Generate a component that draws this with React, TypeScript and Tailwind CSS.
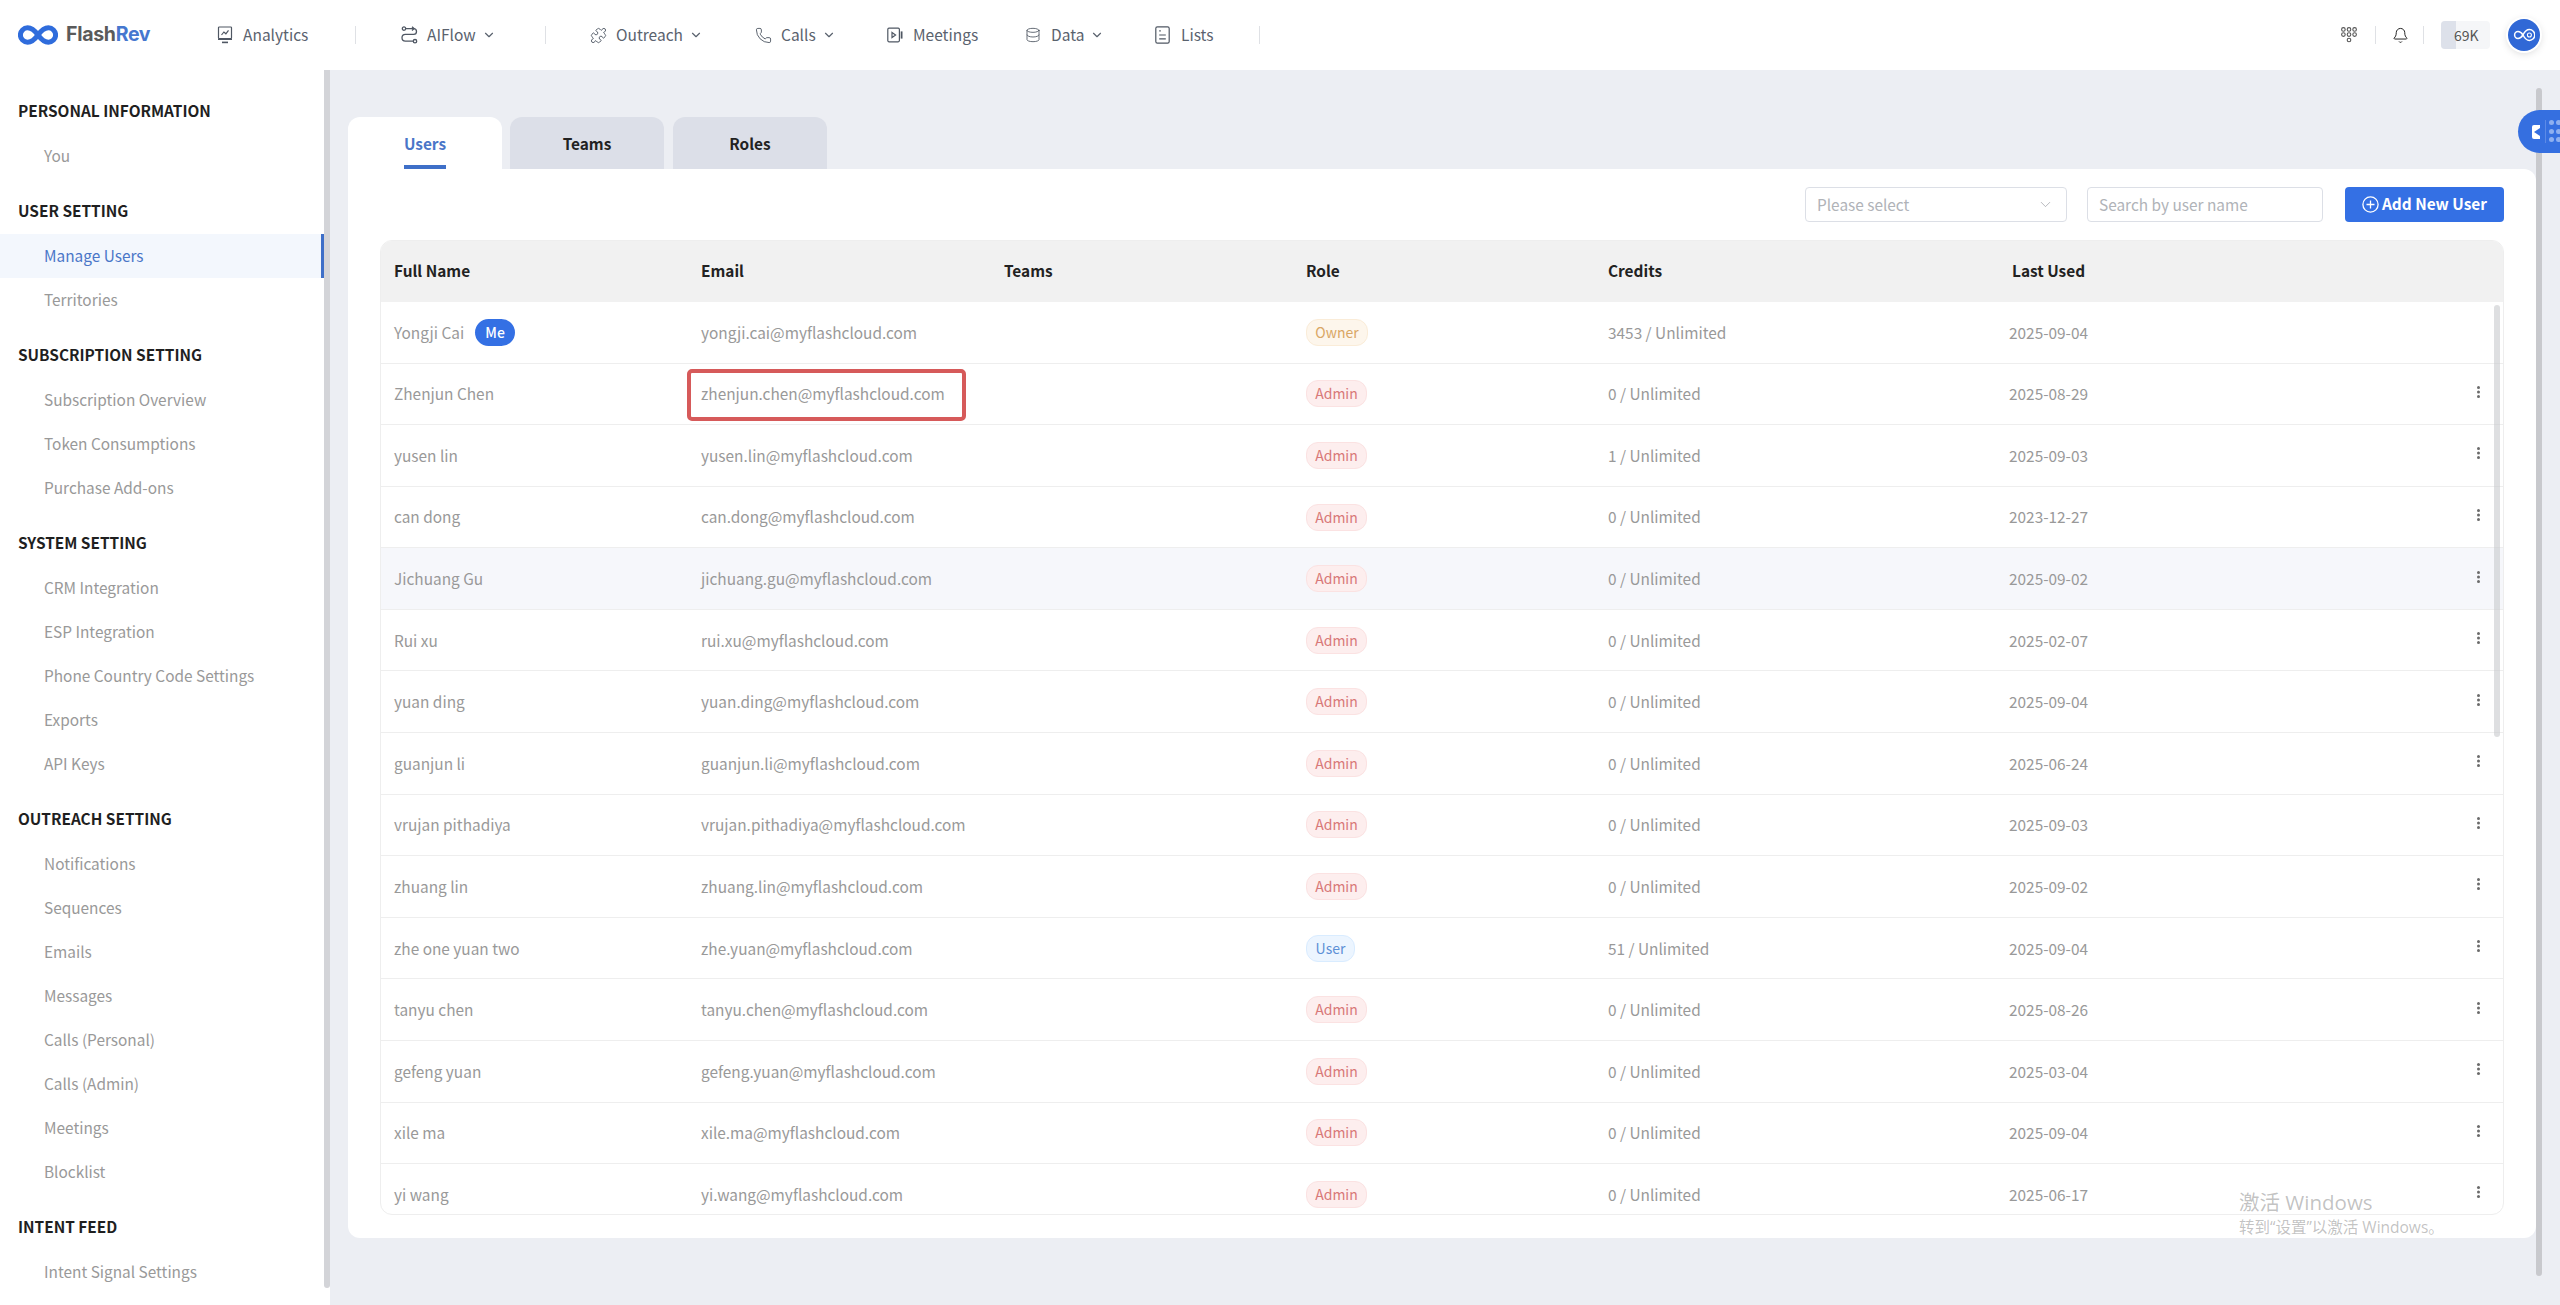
import { Bell, ChevronDown, Database, Phone, Puzzle } from 'lucide-react'
import { ReactNode } from 'react'

const sidebar = [
  { title: 'PERSONAL INFORMATION', items: ['You'] },
  { title: 'USER SETTING', items: ['Manage Users', 'Territories'] },
  { title: 'SUBSCRIPTION SETTING', items: ['Subscription Overview', 'Token Consumptions', 'Purchase Add-ons'] },
  { title: 'SYSTEM SETTING', items: ['CRM Integration', 'ESP Integration', 'Phone Country Code Settings', 'Exports', 'API Keys'] },
  {
    title: 'OUTREACH SETTING',
    items: ['Notifications', 'Sequences', 'Emails', 'Messages', 'Calls (Personal)', 'Calls (Admin)', 'Meetings', 'Blocklist'],
  },
  { title: 'INTENT FEED', items: ['Intent Signal Settings'] },
]

const users = [
  ['Yongji Cai', 'yongji.cai@myflashcloud.com', 'Owner', '3453 / Unlimited', '2025-09-04'],
  ['Zhenjun Chen', 'zhenjun.chen@myflashcloud.com', 'Admin', '0 / Unlimited', '2025-08-29'],
  ['yusen lin', 'yusen.lin@myflashcloud.com', 'Admin', '1 / Unlimited', '2025-09-03'],
  ['can dong', 'can.dong@myflashcloud.com', 'Admin', '0 / Unlimited', '2023-12-27'],
  ['Jichuang Gu', 'jichuang.gu@myflashcloud.com', 'Admin', '0 / Unlimited', '2025-09-02'],
  ['Rui xu', 'rui.xu@myflashcloud.com', 'Admin', '0 / Unlimited', '2025-02-07'],
  ['yuan ding', 'yuan.ding@myflashcloud.com', 'Admin', '0 / Unlimited', '2025-09-04'],
  ['guanjun li', 'guanjun.li@myflashcloud.com', 'Admin', '0 / Unlimited', '2025-06-24'],
  ['vrujan pithadiya', 'vrujan.pithadiya@myflashcloud.com', 'Admin', '0 / Unlimited', '2025-09-03'],
  ['zhuang lin', 'zhuang.lin@myflashcloud.com', 'Admin', '0 / Unlimited', '2025-09-02'],
  ['zhe one yuan two', 'zhe.yuan@myflashcloud.com', 'User', '51 / Unlimited', '2025-09-04'],
  ['tanyu chen', 'tanyu.chen@myflashcloud.com', 'Admin', '0 / Unlimited', '2025-08-26'],
  ['gefeng yuan', 'gefeng.yuan@myflashcloud.com', 'Admin', '0 / Unlimited', '2025-03-04'],
  ['xile ma', 'xile.ma@myflashcloud.com', 'Admin', '0 / Unlimited', '2025-09-04'],
  ['yi wang', 'yi.wang@myflashcloud.com', 'Admin', '0 / Unlimited', '2025-06-17'],
]

const cols = 'grid grid-cols-[306px_303px_302px_302px_401px_470px_1fr]'

function Logo() {
  return (
    <svg width="40" height="20" viewBox="0 0 40 20" fill="none" stroke="#2f6cdc" strokeWidth="5">
      <path d="M20 10C16.5 5.2 13 2.8 9.6 2.8a7.2 7.2 0 0 0 0 14.4c3.4 0 6.9-2.4 10.4-7.2s7-7.2 10.4-7.2a7.2 7.2 0 0 1 0 14.4c-3.4 0-6.9-2.4-10.4-7.2z" />
    </svg>
  )
}

function AnalyticsIcon() {
  return (
    <svg width="16" height="18" viewBox="0 0 16 18" fill="none" stroke="#4f5763" strokeWidth="1.2">
      <rect x="1.5" y="1" width="13" height="11.5" rx="0.8" />
      <path d="M1 13.2h14" strokeWidth="1.6" />
      <path d="M4.5 9l2.4-3 2 1.8 2.6-3.4" />
      <path d="M5 16.4h6" strokeWidth="1.6" />
    </svg>
  )
}

function FlowIcon() {
  return (
    <svg width="17" height="18" viewBox="0 0 17 18" fill="none" stroke="#4f5763" strokeWidth="1.3">
      <circle cx="3" cy="2.6" r="1.7" />
      <circle cx="14" cy="15.2" r="1.7" />
      <path d="M5 2.6h7.6a2.9 2.9 0 0 1 0 5.8H4.4a3.2 3.2 0 0 0 0 6.8H12" />
      <path d="M11 .8l2 1.8-2 1.8" />
    </svg>
  )
}

function MeetingIcon() {
  return (
    <svg width="16" height="16" viewBox="0 0 16 16" fill="none" stroke="#4f5763" strokeWidth="1.2">
      <rect x="0.8" y="1.2" width="11.6" height="13.6" rx="1.2" />
      <path d="M5 5.4l3.6 2.6L5 10.6z" />
      <path d="M14.6 4.4v7.2" strokeWidth="1.8" />
    </svg>
  )
}

function ListIcon() {
  return (
    <svg width="15" height="18" viewBox="0 0 15 18" fill="none" stroke="#4f5763" strokeWidth="1.2">
      <rect x="0.8" y="0.8" width="13.4" height="16.4" rx="1.6" />
      <path d="M4.2 4.8h1.6M4.2 9h6.6M4.2 12.8h6.6" />
    </svg>
  )
}

function KeypadIcon() {
  const spots = [
    [2.4, 2.4], [8, 2.4], [13.6, 2.4],
    [2.4, 7.6], [8, 7.6], [13.6, 7.6],
    [8, 13],
  ]
  return (
    <svg width="16" height="16" viewBox="0 0 16 16" fill="none" stroke="#555" strokeWidth="1.1">
      {spots.map(([x, y]) => (
        <circle key={`${x}-${y}`} cx={x} cy={y} r="1.8" />
      ))}
    </svg>
  )
}

function AvatarIcon() {
  return (
    <svg width="22" height="14" viewBox="0 0 22 14" fill="none" stroke="#fff" strokeWidth="1.5">
      <path d="M10 7C8.4 4.6 6.8 3.6 5 3.6a3.4 3.4 0 0 0 0 6.8c1.8 0 3.4-1 5-3.4 1.7-3.4 4-5.4 6.4-5.4a5.4 5.4 0 0 1 0 10.8C14 12.4 11.7 10.4 10 7z" />
      <circle cx="16.4" cy="7" r="2" strokeWidth="1.1" />
    </svg>
  )
}

function Dots() {
  return (
    <svg width="5" height="14" viewBox="0 0 5 14" fill="#6b6b6b" className="mb-[4px]">
      <circle cx="2.5" cy="2.4" r="1.5" />
      <circle cx="2.5" cy="7" r="1.5" />
      <circle cx="2.5" cy="11.6" r="1.5" />
    </svg>
  )
}

function NavItem({ icon, label, caret, className }: { icon: ReactNode; label: string; caret?: boolean; className: string }) {
  return (
    <div className={`flex items-center text-[15.5px] text-[#5a626e] ${className}`}>
      <span className="flex w-[26px] shrink-0 items-center">{icon}</span>
      <span>{label}</span>
      {caret && <ChevronDown size={14} strokeWidth={2} className="ml-[6px]" />}
    </div>
  )
}

function Sep({ className }: { className: string }) {
  return <div className={`h-[18px] w-px bg-[#dfe1e5] ${className}`} />
}

function Header() {
  return (
    <header className="relative flex h-[70px] shrink-0 items-center bg-white pl-[18px]">
      <Logo />
      <span className="ml-[8px] w-[84px] font-['Inter',sans-serif] text-[19.5px] font-bold tracking-[-0.3px] text-[#5a5a5a]">
        Flash<span className="text-[#4577cf]">Rev</span>
      </span>
      <NavItem className="ml-[67px] w-[138px]" icon={<AnalyticsIcon />} label="Analytics" />
      <Sep className="" />
      <NavItem className="ml-[45px] w-[144px]" icon={<FlowIcon />} label="AIFlow" caret />
      <Sep className="" />
      <NavItem className="ml-[44px] w-[165px]" icon={<Puzzle size={17} strokeWidth={1.3} color="#4f5763" />} label="Outreach" caret />
      <NavItem className="w-[132px]" icon={<Phone size={17} strokeWidth={1.3} color="#4f5763" />} label="Calls" caret />
      <NavItem className="w-[138px]" icon={<MeetingIcon />} label="Meetings" />
      <NavItem className="w-[130px]" icon={<Database size={16} strokeWidth={1.3} color="#4f5763" />} label="Data" caret />
      <NavItem className="w-[104px]" icon={<ListIcon />} label="Lists" />
      <Sep className="" />
      <div className="ml-auto flex items-center pr-[20px]">
        <KeypadIcon />
        <Sep className="ml-[18px]" />
        <Bell size={17} strokeWidth={1.4} color="#222" className="ml-[16px]" />
        <Sep className="ml-[14px]" />
        <div className="relative ml-[17px] flex h-[28px] w-[49px] items-center overflow-hidden rounded-[4px] bg-[#f5f6f8] pl-[13px] text-[14px] text-[#555]">
          <div className="absolute inset-y-0 left-0 w-[15px] bg-[#dde1ea]" />
          <span className="relative">69K</span>
        </div>
        <div className="ml-[18px] flex h-[32px] w-[32px] items-center justify-center rounded-full bg-[#3068d6] shadow-[0_0_0_2px_#fff,0_2px_8px_rgba(0,0,0,0.18)]">
          <AvatarIcon />
        </div>
      </div>
    </header>
  )
}

function Sidebar() {
  return (
    <aside className="flex h-full w-[330px] shrink-0 bg-white">
      <div className="w-[324px] pt-[28px]">
        {sidebar.map((group) => (
          <div key={group.title} className="mb-[20px]">
            <div className="mb-[12px] h-[24px] pl-[18px] text-[15.4px] leading-[24px] font-bold text-[#1f1f1f]">{group.title}</div>
            {group.items.map((item) =>
              item === 'Manage Users' ? (
                <div key={item} className="flex h-[44px] items-center border-r-[3px] border-[#3e6fc8] bg-[#f3f7fd] pl-[44px] text-[15.4px] text-[#4a76c8]">
                  {item}
                </div>
              ) : (
                <div key={item} className="flex h-[44px] items-center pl-[44px] text-[15.4px] text-[#999]">
                  {item}
                </div>
              ),
            )}
          </div>
        ))}
      </div>
      <div className="h-[1218px] w-[6px] rounded-b-[3px] bg-[#d3d4d8]" />
    </aside>
  )
}

function RoleBadge({ role }: { role: string }) {
  const tone =
    role === 'Owner'
      ? 'border-[#faecd8] bg-[#fdf6ec] text-[#d9a765] w-[62px]'
      : role === 'User'
        ? 'border-[#d9ecff] bg-[#ecf5ff] text-[#5c90d6] w-[49px]'
        : 'border-[#fbe2e2] bg-[#fdeeee] text-[#d87878] w-[61px]'
  return <span className={`flex h-[27px] items-center justify-center rounded-[12px] border text-[14px] ${tone}`}>{role}</span>
}

function UserTable() {
  return (
    <div className="relative mt-[18px] h-[975px] overflow-hidden rounded-[12px] border border-[#eeeeee]">
      <div className={`${cols} h-[61px] items-center bg-[#f1f1f1] pb-[2px] text-[15.4px] font-bold text-[#222]`}>
        <div className="pl-[13px]">Full Name</div>
        <div className="pl-[14px]">Email</div>
        <div className="pl-[14px]">Teams</div>
        <div className="pl-[14px]">Role</div>
        <div className="pl-[14px]">Credits</div>
        <div className="pl-[17px]">Last Used</div>
        <div />
      </div>
      {users.map(([name, email, role, credits, used], i) => (
        <div
          key={email}
          className={`${cols} h-[61.58px] items-center border-b border-[#eeeeee] text-[15.4px] text-[#999] ${name === 'Jichuang Gu' ? 'bg-[#f6f7fb]' : ''}`}
        >
          <div className="flex items-center pl-[13px]">
            {name}
            {i === 0 && (
              <span className="ml-[11px] flex h-[27px] w-[40px] items-center justify-center rounded-[14px] bg-[#3470e4] text-[14px] font-medium text-white">
                Me
              </span>
            )}
          </div>
          <div className="relative flex h-full items-center pl-[14px]">
            {email}
            {i === 1 && <div className="absolute top-[5px] left-0 h-[52px] w-[279px] rounded-[5px] border-[4px] border-[#d65a5a]" />}
          </div>
          <div />
          <div className="pl-[14px]">
            <RoleBadge role={role} />
          </div>
          <div className="pl-[14px]">{credits}</div>
          <div className="pl-[14px]">{used}</div>
          <div className="flex pl-[11px]">{i > 0 && <Dots />}</div>
        </div>
      ))}
      <div className="absolute top-[64px] right-[3px] h-[432px] w-[6px] rounded-[3px] bg-[#c8c9cd]/60" />
    </div>
  )
}

function Tab({ label, active, className = '' }: { label: string; active?: boolean; className?: string }) {
  return active ? (
    <div className="flex h-[52px] w-[154px] justify-center rounded-t-[12px] bg-white text-[15.4px] font-bold text-[#4a76c8]">
      <div className="flex h-full items-center border-b-4 border-[#3e6fc8] pt-[6px]">{label}</div>
    </div>
  ) : (
    <div className={`flex h-[52px] w-[154px] items-center justify-center rounded-t-[12px] bg-[#dcdfe8] pt-[2px] text-[15.4px] font-bold text-[#222] ${className}`}>
      {label}
    </div>
  )
}

export default function App() {
  return (
    <div className="relative flex h-[1305px] w-[2560px] flex-col overflow-hidden bg-[#eceef3] font-['Noto_Sans_CJK_SC','Noto_Sans',sans-serif]">
      <Header />
      <div className="flex min-h-0 flex-1">
        <Sidebar />
        <main className="min-w-0 flex-1 pt-[47px] pr-[24px] pl-[18px]">
          <div className="flex gap-[8px]">
            <Tab label="Users" active />
            <Tab label="Teams" />
            <Tab label="Roles" className="ml-[1px]" />
          </div>
          <section className="h-[1069px] rounded-[12px] rounded-tl-none bg-white px-[32px] pt-[18px]">
            <div className="flex h-[35px] justify-end gap-[20px]">
              <div className="flex w-[262px] items-center justify-between rounded-[4px] border border-[#dcdfe6] pr-[12px] pl-[11px] text-[15.4px] text-[#b0b3b8]">
                Please select
                <ChevronDown size={17} strokeWidth={1} color="#9a9da3" />
              </div>
              <div className="flex w-[236px] items-center rounded-[4px] border border-[#dcdfe6] pl-[11px] text-[15.4px] text-[#b0b3b8]">
                Search by user name
              </div>
              <button className="ml-[2px] flex w-[159px] items-center justify-center gap-[3px] rounded-[4px] bg-[#3470e4] pb-[1px] text-[15.4px] font-bold text-white">
                <svg width="17" height="17" viewBox="0 0 17 17" fill="none" stroke="#fff" strokeWidth="1.3">
                  <circle cx="8.5" cy="8.5" r="7.6" />
                  <path d="M8.5 4.5v8M4.5 8.5h8" />
                </svg>
                Add New User
              </button>
            </div>
            <UserTable />
          </section>
        </main>
      </div>
      {/* page scrollbar */}
      <div className="absolute top-[88px] left-[2536px] h-[1188px] w-[6px] rounded-[3px] bg-[#c8c9cd]" />
      {/* floating helper button */}
      <div className="absolute top-[110px] right-0 flex h-[43px] w-[42px] items-center overflow-hidden rounded-l-[22px] bg-[#356fe0]">
        <div className="ml-[14px] flex h-[14px] w-[10px] items-center justify-end rounded-l-[2px] bg-white">
          <div className="h-0 w-0 border-y-[4px] border-r-[6px] border-y-transparent border-r-[#356fe0]" />
        </div>
        <div className="ml-[5px] grid h-[23px] grid-cols-2 gap-[3px] border-l border-[#5c8ae6] pl-[3px]">
          {[0, 1, 2, 3, 4, 5].map((n) => (
            <div key={n} className="h-[5px] w-[5px] rounded-full bg-[#8fb0f0]" />
          ))}
        </div>
      </div>
      {/* windows activation watermark */}
      <div className="pointer-events-none absolute top-[1188px] left-[2239px] text-[rgba(120,120,120,0.45)]">
        <div className="font-['Open_Sans','Noto_Sans_CJK_SC',sans-serif] text-[20.5px] leading-[28px]">激活 Windows</div>
        <div className="mt-[1px] font-['Open_Sans','Noto_Sans_CJK_SC',sans-serif] text-[15.5px] leading-[20px]">转到“设置”以激活 Windows。</div>
      </div>
    </div>
  )
}
